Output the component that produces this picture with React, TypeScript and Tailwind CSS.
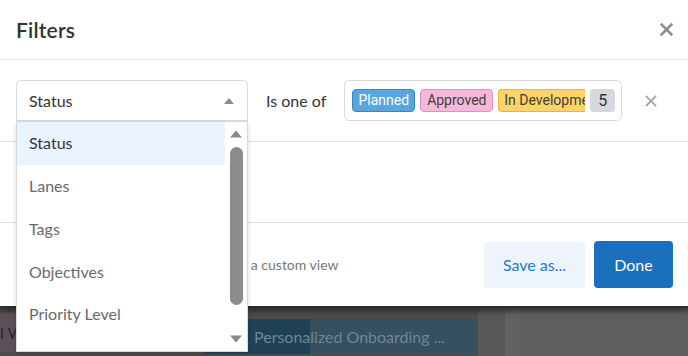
import React from "react";

const XIcon = ({ size, stroke, color }: { size: number; stroke: number; color: string }) => (
  <svg width={size} height={size} viewBox="0 0 12 12">
    <path d="M1.5 1.5 L10.5 10.5 M10.5 1.5 L1.5 10.5" stroke={color} strokeWidth={stroke} strokeLinecap="square" />
  </svg>
);

const Tri = ({ up, w, h, color }: { up: boolean; w: number; h: number; color: string }) => (
  <svg width={w} height={h} viewBox="0 0 10 6">
    {up ? <path d="M0 6 L5 0 L10 6 Z" fill={color} /> : <path d="M0 0 L5 6 L10 0 Z" fill={color} />}
  </svg>
);

export default function App() {
  const items = ["Status", "Lanes", "Tags", "Objectives", "Priority Level"];
  return (
    <div className="relative w-[688px] h-[356px] overflow-hidden bg-[#4f4f4f]" style={{ fontFamily: "Lato, 'Noto Sans', sans-serif" }}>
      {/* Modal */}
      <div className="relative z-10 bg-white h-[306px] flex flex-col shadow-[0_4px_8px_rgba(0,0,0,0.35)]">
        <div className="h-[60px] flex items-center justify-between pl-4 pr-[15px] border-b border-[#e2e2e2]">
          <div className="text-[21px] font-semibold text-[#333] tracking-[0.2px]">Filters</div>
          <XIcon size={13} stroke={2.4} color="#8a8a8a" />
        </div>
        <div className="h-[82px] border-b border-[#e2e2e2] flex items-center pl-4">
          <div className="w-[232px] h-[41px] border border-[#dcdcdc] rounded-t-[5px] flex items-center justify-between pl-3 pr-[13px]">
            <span className="text-[16px] text-[#333]">Status</span>
            <Tri up w={10} h={6} color="#8a8a8a" />
          </div>
          <div className="ml-[18px] text-[16px] text-[#333]">Is one of</div>
          <div className="ml-[18px] w-[278px] h-[41px] border border-[#dcdcdc] rounded-[5px] flex items-center pl-[7px] gap-[5px] overflow-hidden" style={{ fontFamily: "Roboto, sans-serif" }}>
            <span className="h-[23px] w-[63px] shrink-0 flex items-center justify-center rounded-[4px] bg-[#5aa6dc] border border-[#3c86c2] text-white text-[14px]">Planned</span>
            <span className="h-[23px] w-[73px] shrink-0 flex items-center justify-center rounded-[4px] bg-[#f4b9d9] border border-[#e18fc0] text-[#3f3f3f] text-[14px]">Approved</span>
            <span className="h-[23px] w-[87px] shrink-0 flex items-center pl-[5px] rounded-l-[4px] bg-[#fdd46a] border border-r-0 border-[#e8b63c] text-[#3f3f3f] text-[14px] overflow-hidden whitespace-nowrap">In Development</span>
            <span className="h-[23px] w-[25px] shrink-0 flex items-center justify-center rounded-[4px] bg-[#d5d8dc] text-[#333] text-[16px]">5</span>
          </div>
          <div className="ml-[23px]">
            <XIcon size={12} stroke={1.6} color="#9a9a9a" />
          </div>
        </div>
        <div className="h-[81px] border-b border-[#e2e2e2]"></div>
        <div className="flex-1 flex items-center pl-4 pr-[15px]">
          <div className="flex-1 pl-[12px] text-[14px] text-[#777] whitespace-nowrap">Keep these filters by saving them as a custom view</div>
          <div className="w-[101px] h-[46px] rounded-[4px] bg-[#eef4fb] text-[#2a78c6] text-[16px] flex items-center justify-center">Save as...</div>
          <div className="ml-[9px] w-[79px] h-[47px] rounded-[4px] bg-[#1b70bd] text-white text-[16px] flex items-center justify-center">Done</div>
        </div>
      </div>

      {/* Board background strip */}
      <div className="relative h-[50px] flex bg-[#4c4c4c]">
        <div className="absolute inset-x-0 top-0 h-[8px] bg-gradient-to-b from-[#3a3a3a] to-transparent"></div>
        <div className="mt-[7px] h-[39px] w-[200px] bg-[#5d5058] text-[#2a2a2a] text-[16px] flex items-center overflow-hidden whitespace-nowrap">l Work</div>
        <div className="mt-[13px] h-[35px] ml-[5px] w-[273px] flex">
          <div className="w-[105px] bg-[#1f4257]"></div>
          <div className="flex-1 bg-[#36505f]"></div>
        </div>
        <div className="w-[27px] bg-[#585858]"></div>
        <div className="w-[15px] bg-[#626262]"></div>
        <div className="flex-1 bg-[#5e5e5e]"></div>
        <div className="absolute left-[254px] top-[13px] h-[35px] flex items-center text-[16px] text-[#6d8796] whitespace-nowrap">Personalized Onboarding ...</div>
      </div>

      {/* Dropdown */}
      <div className="absolute z-20 left-[16px] top-[121px] w-[232px] h-[231px] bg-white border border-[#d8d8d8] shadow-[0_2px_4px_rgba(0,0,0,0.15)] flex">
        <div className="flex-1 flex flex-col">
          {items.map((it, i) => (
            <div key={it} className={`h-[42.75px] flex items-center pl-3 text-[16px] ${i === 0 ? "bg-[#eaf4fe] text-[#333]" : "text-[#6a6a6a]"}`}>
              {it}
            </div>
          ))}
        </div>
        <div className="w-[22px] flex flex-col items-center pt-[8px] pb-[8px]">
          <Tri up w={12} h={8} color="#8a8a8a" />
          <div className="mt-[9px] w-[13px] h-[158px] rounded-full bg-[#8c8c8c]"></div>
          <div className="flex-1"></div>
          <Tri up={false} w={12} h={8} color="#8a8a8a" />
        </div>
      </div>
    </div>
  );
}
